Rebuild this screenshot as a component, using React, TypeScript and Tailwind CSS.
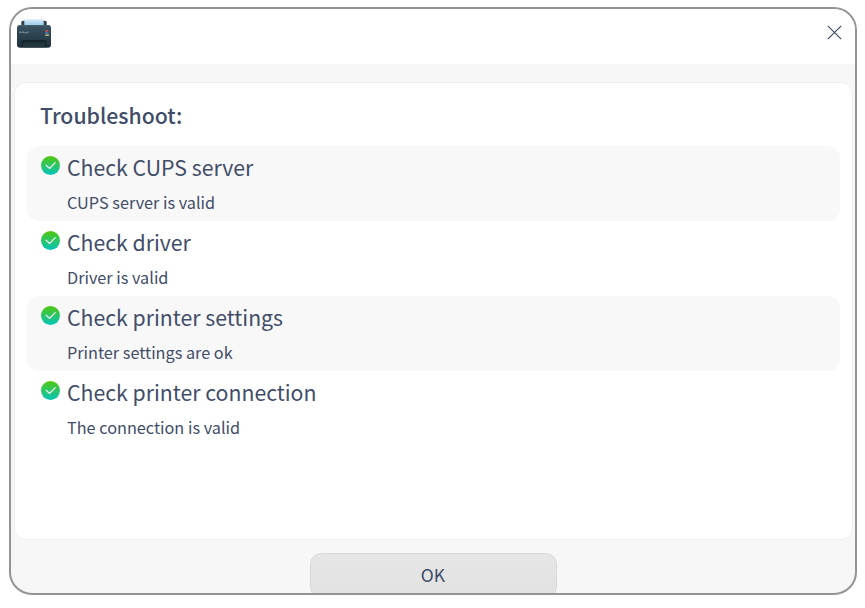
import React from "react";

const checks = [
  { title: "Check CUPS server", detail: "CUPS server is valid" },
  { title: "Check driver", detail: "Driver is valid" },
  { title: "Check printer settings", detail: "Printer settings are ok" },
  { title: "Check printer connection", detail: "The connection is valid" },
];

function PrinterIcon() {
  return (
    <svg width="36" height="32" viewBox="0 0 36 32" className="block">
      <defs>
        <linearGradient id="printer-body" x1="0" y1="0" x2="0" y2="1">
          <stop offset="0" stopColor="#3b5563" />
          <stop offset="0.5" stopColor="#2b424e" />
          <stop offset="1" stopColor="#1d2e38" />
        </linearGradient>
        <linearGradient id="printer-paper" x1="0" y1="0" x2="0" y2="1">
          <stop offset="0" stopColor="#d5edfb" />
          <stop offset="1" stopColor="#9fcbe8" />
        </linearGradient>
      </defs>
      <rect x="5.3" y="4.8" width="25.4" height="8" rx="1.5" fill="#30444f" />
      <path d="M8.3 3.3H25l2.7 2.5V9H8.3z" fill="url(#printer-paper)" />
      <path d="M25 1.2l2.7 4.3L25 4z" fill="#d9e6ee" />
      <rect x="1" y="9" width="34" height="22.8" rx="3" fill="url(#printer-body)" />
      <path d="M2.5 9.5h31" stroke="#4c6572" strokeWidth="0.7" />
      <path d="M5.5 31v-5.5a1.5 1.5 0 0 1 1.5-1.5h22a1.5 1.5 0 0 1 1.5 1.5v5.5z" fill="#15232b" />
      <rect x="7" y="26.3" width="22" height="5" rx="1" fill="#22343e" />
      <path d="M3.5 16.2h2m.8 0h1.5m.8.4h2m.8-.4h1.2" stroke="#a3b3bb" strokeWidth="1.4" opacity="0.75" />
      <rect x="29.2" y="14" width="3.2" height="1.8" fill="#b84b50" />
      <rect x="29.2" y="16.5" width="3.2" height="1.3" fill="#4d8fd0" />
      <rect x="29.2" y="18.6" width="3.8" height="1.2" fill="#e8cf7c" />
    </svg>
  );
}

function CheckIcon() {
  return (
    <svg width="20" height="20" viewBox="0 0 20 20" className="block shrink-0">
      <defs>
        <linearGradient id="check-fill" x1="0" y1="0" x2="0" y2="1">
          <stop offset="0" stopColor="#51c70c" />
          <stop offset="1" stopColor="#05c5bd" />
        </linearGradient>
      </defs>
      <circle cx="10.5" cy="10.5" r="9.5" fill="url(#check-fill)" />
      <path d="M5.7 9.9l3.9 3.6 5.9-6.1" fill="none" stroke="#fff" strokeWidth="1.2" />
    </svg>
  );
}

export default function App() {
  return (
    <div className="h-[608px] w-[865px] overflow-hidden bg-white pt-[7px] pl-[9px] font-['Noto_Sans_CJK_SC',sans-serif] text-[#414d68]">
      <div className="flex h-[588px] w-[848px] flex-col overflow-hidden rounded-[23px] border-2 border-[#949494] bg-[#f7f7f7]">
        <header className="flex h-[55px] shrink-0 items-start justify-between bg-white pt-[7px] pr-[13px] pl-[5px]">
          <PrinterIcon />
          <button aria-label="Close" className="mt-[9px]">
            <svg width="15" height="15" viewBox="0 0 15 15" className="block">
              <path d="M.8.8l13.4 13.4M14.2.8L.8 14.2" stroke="#414d68" strokeWidth="1.2" />
            </svg>
          </button>
        </header>
        <main className="mt-[18px] mr-[2px] ml-[3px] h-[458px] shrink-0 rounded-[12px] border border-[#eeeeee] bg-white px-3">
          <h1 className="flex h-[63px] items-center pt-px pl-[13px] text-[21.25px] leading-none font-medium">Troubleshoot:</h1>
          <ul>
            {checks.map((check) => (
              <li key={check.title} className="flex h-[75px] gap-[7px] rounded-[12px] pt-[9px] pl-[13px] odd:bg-[#f8f8f8]">
                <CheckIcon />
                <div>
                  <p className="h-[35px] text-[21.25px] leading-[23px]">{check.title}</p>
                  <p className="text-[16.25px] leading-[24px]">{check.detail}</p>
                </div>
              </li>
            ))}
          </ul>
        </main>
        <button className="mt-[13px] h-[45px] w-[247px] shrink-0 self-center rounded-[11px] border border-[#d9d9d9] bg-gradient-to-b from-[#e6e6e6] to-[#e2e2e2] pb-[2px] text-[17.5px] leading-[41px]">
          OK
        </button>
      </div>
    </div>
  );
}
